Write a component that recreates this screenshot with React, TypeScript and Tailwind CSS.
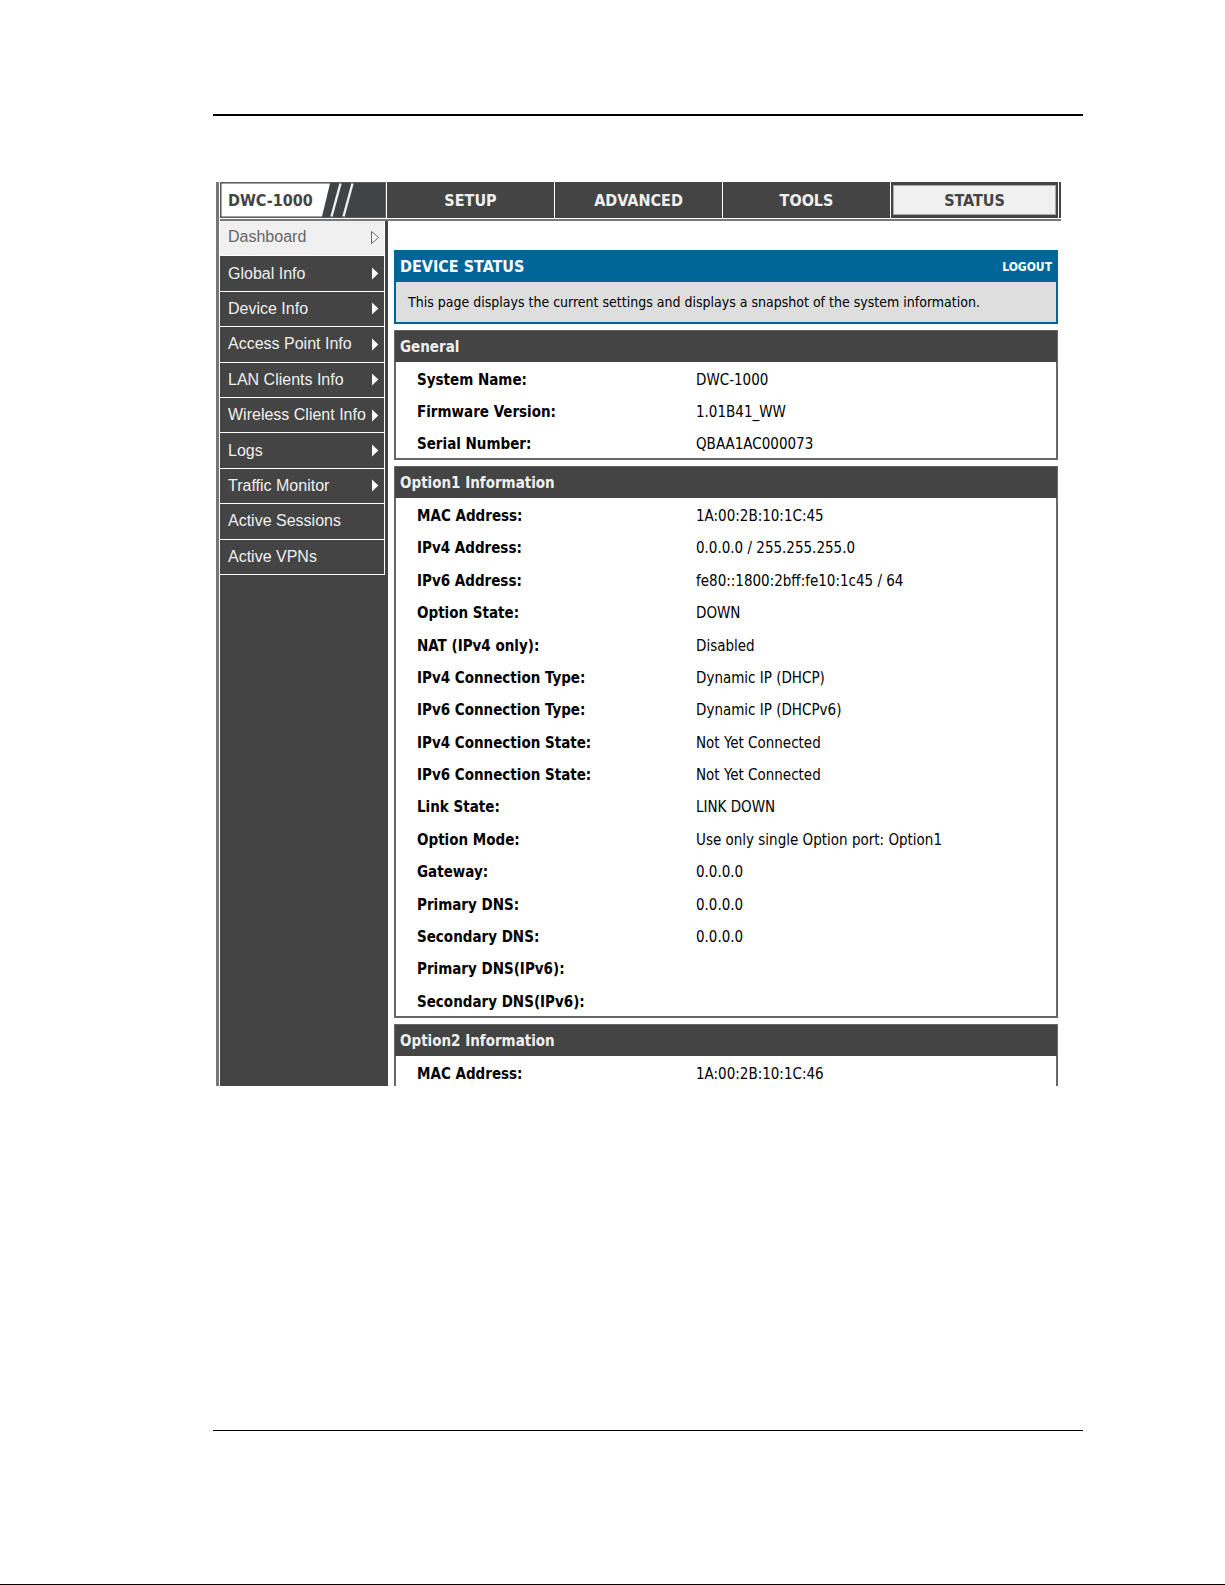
type Row = { label: string; value: string }

const tabs = ['SETUP', 'ADVANCED', 'TOOLS']

const menuItems = [
    { label: 'Dashboard', arrow: true },
    { label: 'Global Info', arrow: true },
    { label: 'Device Info', arrow: true },
    { label: 'Access Point Info', arrow: true },
    { label: 'LAN Clients Info', arrow: true },
    { label: 'Wireless Client Info', arrow: true },
    { label: 'Logs', arrow: true },
    { label: 'Traffic Monitor', arrow: true },
    { label: 'Active Sessions', arrow: false },
    { label: 'Active VPNs', arrow: false },
]

const generalRows: Row[] = [
    { label: 'System Name:', value: 'DWC-1000' },
    { label: 'Firmware Version:', value: '1.01B41_WW' },
    { label: 'Serial Number:', value: 'QBAA1AC000073' },
]

const option1Rows: Row[] = [
    { label: 'MAC Address:', value: '1A:00:2B:10:1C:45' },
    { label: 'IPv4 Address:', value: '0.0.0.0 / 255.255.255.0' },
    { label: 'IPv6 Address:', value: 'fe80::1800:2bff:fe10:1c45 / 64' },
    { label: 'Option State:', value: 'DOWN' },
    { label: 'NAT (IPv4 only):', value: 'Disabled' },
    { label: 'IPv4 Connection Type:', value: 'Dynamic IP (DHCP)' },
    { label: 'IPv6 Connection Type:', value: 'Dynamic IP (DHCPv6)' },
    { label: 'IPv4 Connection State:', value: 'Not Yet Connected' },
    { label: 'IPv6 Connection State:', value: 'Not Yet Connected' },
    { label: 'Link State:', value: 'LINK DOWN' },
    { label: 'Option Mode:', value: 'Use only single Option port: Option1' },
    { label: 'Gateway:', value: '0.0.0.0' },
    { label: 'Primary DNS:', value: '0.0.0.0' },
    { label: 'Secondary DNS:', value: '0.0.0.0' },
    { label: 'Primary DNS(IPv6):', value: '' },
    { label: 'Secondary DNS(IPv6):', value: '' },
]

const option2Rows: Row[] = [{ label: 'MAC Address:', value: '1A:00:2B:10:1C:46' }]

const Logo = () => (
    <div className="relative flex items-center border-r border-white bg-[#404344]">
        <svg className="absolute inset-0 h-full w-full" viewBox="0 0 166 36" preserveAspectRatio="none" aria-hidden="true">
            <path d="M0 0H166V36H0Z" fill="none" stroke="#777" strokeWidth="1" />
            <path d="M1.500 1.500H110L102 34.500H1.500Z" fill="#fff" />
            <path d="M120.500 1.500L111.500 34.500M132.500 1.500L123.500 34.500" stroke="#eee" strokeWidth="2.400" />
        </svg>
        <span className="relative pt-0.5 pl-2 text-[16px] font-bold text-[#444]">DWC-1000</span>
    </div>
)

const MenuArrow = ({ active }: { active: boolean }) =>
    active ? (
        <svg width="10" height="15" viewBox="0 0 10 15" aria-hidden="true">
            <path d="M1.500 1.500L8.500 7.500L1.500 13.500Z" fill="#fff" stroke="#666" />
        </svg>
    ) : (
        <svg width="10" height="15" viewBox="0 0 10 15" aria-hidden="true">
            <path d="M2 1.500L8.300 7.500L2 13.500Z" fill="#fff" />
        </svg>
    )

const InfoPanel = ({ title, rows, tableClass, open }: { title: string; rows: Row[]; tableClass: string; open?: boolean }) => (
    <section className={open ? 'border-2 border-b-0 border-[#666]' : 'border-2 border-[#666]'}>
        <h2 className="-mx-px -mt-px h-[31px] bg-[#444] pl-[5px] text-[15px] leading-8 font-bold text-[#f0f0f0]">{title}</h2>
        <table className={`w-full border-collapse text-[15px] leading-5 ${tableClass}`}>
            <tbody>
                {rows.map((row) => (
                    <tr key={row.label}>
                        <th scope="row" className="w-[300px] pt-2 pl-[21px] text-left align-top font-bold">{row.label}</th>
                        <td className="pt-2 align-top">{row.value}</td>
                    </tr>
                ))}
            </tbody>
        </table>
    </section>
)

const App = () => {
    return (
        <div className="flex min-h-screen flex-col border-b border-black bg-white pl-[213px] pr-[142px] pt-[114px] font-['DejaVu_Sans_Condensed','DejaVu_Sans',sans-serif] text-black">
            <hr className="border-t-2 border-black" />

            <div className="mt-[66px] ml-[3px] mr-[22px] border-l-[3px] border-[#777] pl-px">
                <header className="border-b-2 border-[#777]">
                    <nav className="mb-px grid h-9 grid-cols-[167px_1fr_1fr_1fr_1fr] border-r-2 border-[#444] text-[16px] font-bold">
                        <Logo />
                        {tabs.map((tab) => (
                            <a key={tab} href="#" className="flex items-center justify-center border-r border-white bg-[#444] pt-0.5 text-[#f0f0f0]">
                                {tab}
                            </a>
                        ))}
                        <a href="#" aria-current="page" className="flex border-r border-white bg-[#444] px-0.5 py-[3px] text-[#444]">
                            <span className="flex flex-1 items-center justify-center border border-[#aaa] bg-[#f0f0f0] pt-0.5">STATUS</span>
                        </a>
                    </nav>
                </header>

                <div className="flex">
                    <aside className="w-[168px] shrink-0 bg-[#444] pr-[3px]">
                        <nav className="grid h-[354px] auto-rows-fr border-r border-white font-['Liberation_Sans',Arial,sans-serif] text-[16px]">
                            {menuItems.map((item, i) => (
                                <a
                                    key={item.label}
                                    href="#"
                                    className={
                                        i === 0
                                            ? 'flex items-center justify-between border-b border-white bg-[#f0f0f0] pr-1 pb-0.5 pl-2 text-[#666]'
                                            : 'flex items-center justify-between border-b border-white pr-1 pl-2 text-[#f0f0f0]'
                                    }
                                >
                                    {item.label}
                                    {item.arrow && <MenuArrow active={i === 0} />}
                                </a>
                            ))}
                        </nav>
                    </aside>

                    <main className="flex min-w-0 flex-1 flex-col gap-[6px] pt-[29px] pr-[3px] pl-[6px]">
                        <section className="border-2 border-[#006699] bg-[#dedede]">
                            <div className="flex h-[30px] items-center justify-between bg-[#006699] pr-1 pl-1 text-white">
                                <h1 className="text-[16px] font-bold">DEVICE STATUS</h1>
                                <a href="#" className="text-[12px] font-bold">LOGOUT</a>
                            </div>
                            <p className="h-10 pl-3 text-[14px] leading-10">
                                This page displays the current settings and displays a snapshot of the system information.
                            </p>
                        </section>
                        <InfoPanel title="General" rows={generalRows} tableClass="h-[96px]" />
                        <InfoPanel title="Option1 Information" rows={option1Rows} tableClass="h-[518px]" />
                        <InfoPanel title="Option2 Information" rows={option2Rows} tableClass="h-[30px]" open />
                    </main>
                </div>
            </div>

            <hr className="mt-[344px] border-t border-black" />
        </div>
    )
}

export default App
